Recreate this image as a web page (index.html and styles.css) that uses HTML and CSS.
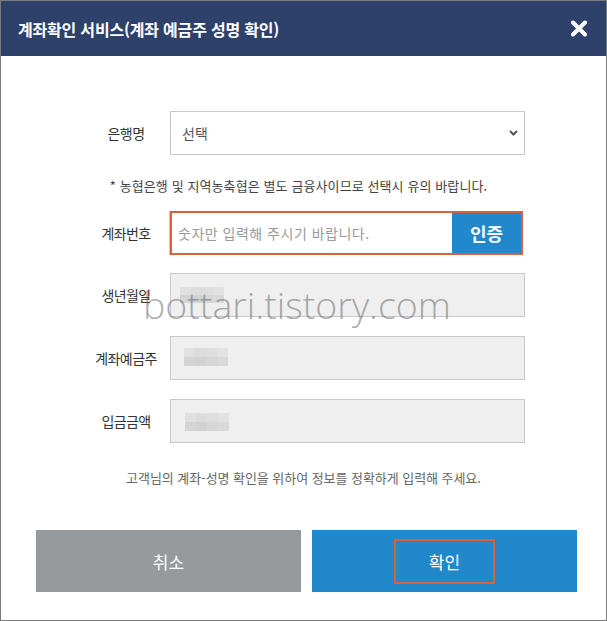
FILE: index.html
```html
<!DOCTYPE html>
<html lang="ko">
<head>
<meta charset="utf-8">
<title>계좌확인 서비스</title>
<link rel="stylesheet" href="styles.css">
</head>
<body>
<div class="dialog">
  <div class="header">
    <h1 class="title">계좌확인 서비스(계좌 예금주 성명 확인)</h1>
    <svg class="close" width="18" height="17" viewBox="0 0 18 17" aria-label="닫기">
      <path d="M3 2.5 L15 14.5 M15 2.5 L3 14.5" stroke="#fff" stroke-width="4" stroke-linecap="round" fill="none"/>
    </svg>
  </div>

  <div class="form">
    <div class="row">
      <div class="label">은행명</div>
      <div class="field select">
        <span class="select-text">선택</span>
        <svg class="chevron" width="9" height="6" viewBox="0 0 9 6"><path d="M1 1 L4.5 4.5 L8 1" stroke="#555" stroke-width="2" fill="none"/></svg>
      </div>
    </div>

    <p class="note">* 농협은행 및 지역농축협은 별도 금융사이므로 선택시 유의 바랍니다.</p>

    <div class="row row-account">
      <div class="label">계좌번호</div>
      <div class="account">
        <span class="placeholder">숫자만 입력해 주시기 바랍니다.</span>
        <button class="verify">인증</button>
      </div>
    </div>

    <div class="row row-gap">
      <div class="label">생년월일</div>
      <div class="field readonly">
        <div class="blur blur-1"><i></i><i></i><i></i><i></i><i></i><i></i><i></i><i></i></div>
      </div>
    </div>

    <div class="row row-gap2">
      <div class="label">계좌예금주</div>
      <div class="field readonly">
        <div class="blur blur-2"><i></i><i></i><i></i><i></i><i></i><i></i><i></i><i></i></div>
      </div>
    </div>

    <div class="row row-gap2">
      <div class="label">입금금액</div>
      <div class="field readonly">
        <div class="blur blur-3"><i></i><i></i><i></i><i></i><i></i><i></i><i></i><i></i></div>
      </div>
    </div>

    <p class="guide">고객님의 계좌-성명 확인을 위하여 정보를 정확하게 입력해 주세요.</p>
  </div>

  <div class="buttons">
    <button class="btn btn-cancel">취소</button>
    <button class="btn btn-ok"><span class="ok-focus">확인</span></button>
  </div>

  <div class="watermark">bottari.tistory.com</div>
</div>
</body>
</html>
```

FILE: styles.css
```css
html, body {
  margin: 0;
  padding: 0;
  background: #fff;
}

body {
  font-family: "Noto Sans CJK KR", "Noto Sans", sans-serif;
}

.dialog {
  position: relative;
  width: 607px;
  height: 621px;
  box-sizing: border-box;
  border: 1px solid #7b7b7b;
  background: #fff;
  overflow: hidden;
}

.header {
  height: 55px;
  background: #2d416b;
  display: flex;
  align-items: center;
  justify-content: space-between;
  padding: 0 18px 0 17px;
}

.title {
  margin: 0;
  color: #fff;
  font-size: 16px;
  font-weight: 700;
  letter-spacing: -0.2px;
  line-height: 20px;
}

.close {
  display: block;
}

.form {
  padding-top: 55px;
  padding-left: 85px;
}

.row {
  display: flex;
  align-items: center;
  height: 44px;
}

.label {
  width: 80px;
  margin-right: 4px;
  text-align: center;
  font-size: 14px;
  letter-spacing: -0.6px;
  color: #333;
  line-height: 20px;
}

.field {
  width: 355px;
  height: 44px;
  box-sizing: border-box;
  border: 1px solid #c8c8c8;
  display: flex;
  align-items: center;
  position: relative;
}

.select {
  background: #fff;
  justify-content: space-between;
  padding: 0 6px 0 11px;
}

.select-text {
  font-size: 14px;
  color: #555;
  line-height: 20px;
}

.chevron {
  display: block;
}

.note {
  margin: 20px 0 0 -85px;
  padding-right: 10px;
  text-align: center;
  font-size: 13px;
  letter-spacing: 0.1px;
  line-height: 22px;
  color: #444;
}

.row-account {
  margin-top: 14px;
}

.account {
  width: 353px;
  height: 44px;
  box-sizing: border-box;
  border: 2px solid #d9623b;
  box-shadow: -1px 0 0 #c8c8c8;
  display: flex;
  align-items: stretch;
}

.placeholder {
  flex: 1;
  display: flex;
  align-items: center;
  padding-left: 6px;
  font-size: 14px;
  letter-spacing: 0.5px;
  color: #999;
}

.verify {
  width: 69px;
  border: 0;
  margin: 0;
  padding: 0;
  background: #2188cc;
  color: #fff;
  font-family: inherit;
  font-size: 18px;
  font-weight: 700;
}

.row-gap {
  margin-top: 18px;
}

.row-gap2 {
  margin-top: 19px;
}

.readonly {
  background: #efefef;
}

.blur {
  position: absolute;
  display: grid;
  grid-template-columns: repeat(4, 11px);
  grid-template-rows: repeat(2, 8px);
}

.blur i {
  background: #d8d8d8;
}

.blur i:nth-child(1) { background: #e0e0e0; }
.blur i:nth-child(2) { background: #dcdcdc; }
.blur i:nth-child(3) { background: #dedede; }
.blur i:nth-child(4) { background: #e2e2e2; }
.blur i:nth-child(5) { background: #d4d4d4; }
.blur i:nth-child(6) { background: #d2d2d2; }
.blur i:nth-child(7) { background: #d6d6d6; }
.blur i:nth-child(8) { background: #d9d9d9; }

.blur-1 { left: 9px; top: 13px; }
.blur-2 { left: 13px; top: 11px; grid-template-rows: repeat(2, 9px); }
.blur-3 { left: 14px; top: 13px; grid-template-rows: repeat(2, 9px); }

.guide {
  margin: 24px 0 0 -85px;
  text-align: center;
  font-size: 13px;
  letter-spacing: -0.05px;
  line-height: 22px;
  color: #666;
}

.buttons {
  display: flex;
  gap: 11px;
  padding: 0 29px 0 35px;
  margin-top: 41px;
}

.btn {
  flex: 1;
  height: 62px;
  border: 0;
  margin: 0;
  padding: 0;
  color: #fff;
  font-family: inherit;
  font-size: 17px;
  display: flex;
  align-items: center;
  justify-content: center;
}

.btn-cancel {
  background: #969a9d;
}

.btn-ok {
  background: #2188cc;
}

.ok-focus {
  width: 101px;
  height: 45px;
  box-sizing: border-box;
  border: 2px solid #d9623b;
  display: flex;
  align-items: center;
  justify-content: center;
}

.watermark {
  position: absolute;
  left: 142px;
  top: 285px;
  font-family: "Open Sans", sans-serif;
  font-weight: 300;
  font-size: 37.5px;
  line-height: 1;
  color: rgba(90, 90, 90, 0.5);
  white-space: nowrap;
  pointer-events: none;
}
```
